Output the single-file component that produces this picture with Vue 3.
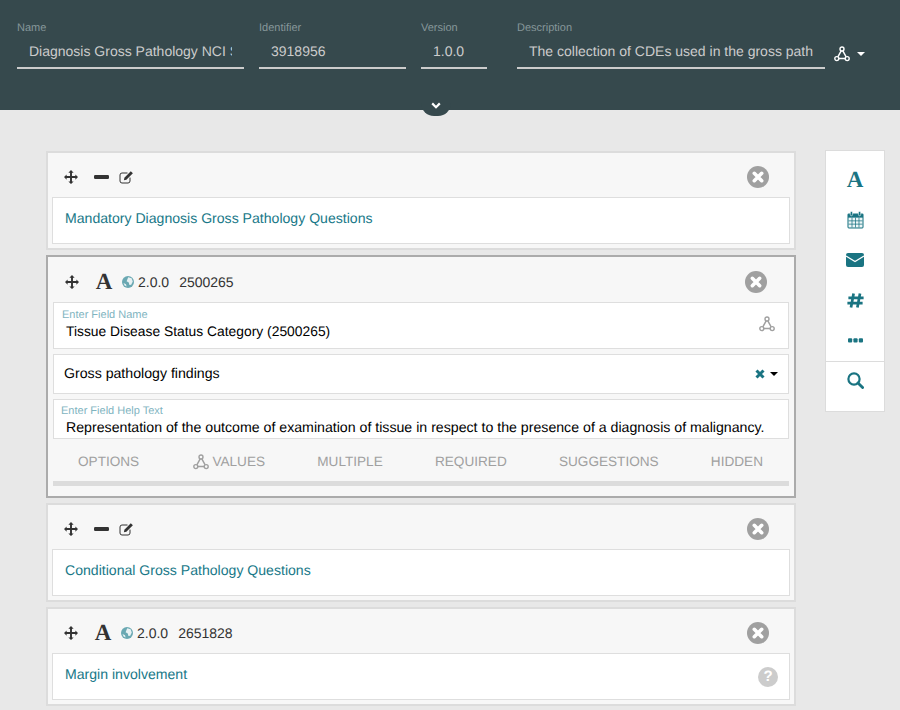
<script setup>
const fields = [
  { label: 'Name', value: 'Diagnosis Gross Pathology NCI S', width: 227 },
  { label: 'Identifier', value: '3918956', width: 147 },
  { label: 'Version', value: '1.0.0', width: 66 },
  { label: 'Description', value: 'The collection of CDEs used in the gross path', width: 308 }
]
const tabs = ['OPTIONS', 'VALUES', 'MULTIPLE', 'REQUIRED', 'SUGGESTIONS', 'HIDDEN']
</script>

<template>
  <div class="page">
    <svg class="defs" width="0" height="0" aria-hidden="true">
      <symbol id="move" viewBox="0 0 16 16">
        <path d="M8 0 11 3H9.1V6.9H13V5L16 8 13 11V9.1H9.1V13H11L8 16 5 13H6.9V9.1H3V11L0 8 3 5V6.9H6.9V3H5Z" fill="currentColor" />
      </symbol>
      <symbol id="minus" viewBox="0 0 15 4">
        <rect width="15" height="4" rx="1.2" fill="currentColor" />
      </symbol>
      <symbol id="edit" viewBox="0 0 15 14">
        <path d="M11 7.6V11a2 2 0 0 1-2 2H3a2 2 0 0 1-2-2V5a2 2 0 0 1 2-2h5.5" fill="none" stroke="currentColor" stroke-width="1" />
        <path d="M5.4 7.8 11.8 1.2 13.9 3.3 7.4 9.8 4.9 10.3Z" fill="currentColor" />
      </symbol>
      <symbol id="close" viewBox="0 0 22 22">
        <circle cx="11" cy="11" r="11" fill="currentColor" />
        <path d="M7.3 7.3 14.7 14.7M14.7 7.3 7.3 14.7" stroke="#fff" stroke-width="3.6" stroke-linecap="round" />
      </symbol>
      <symbol id="globe" viewBox="0 0 12 12">
        <circle cx="6" cy="6" r="6" fill="#6aa8b2" />
        <path d="M6.2 1.2 9.6 2.2 10.8 5.4 9.2 8.8 7.4 9 6.8 6.4 4.6 5.2Z" fill="#e8f1f3" />
        <path d="M1.5 7 4 8.2 4.6 10.6 2.6 9.6Z" fill="#e8f1f3" />
      </symbol>
      <symbol id="graph" viewBox="0 0 16 16">
        <path d="M8 3.4 3 12.4H13Z" fill="none" stroke="currentColor" stroke-width="1.5" />
        <circle cx="8" cy="3" r="2" fill="var(--graph-bg)" stroke="currentColor" stroke-width="1.4" />
        <circle cx="2.8" cy="12.6" r="2" fill="var(--graph-bg)" stroke="currentColor" stroke-width="1.4" />
        <circle cx="13.2" cy="12.6" r="2" fill="var(--graph-bg)" stroke="currentColor" stroke-width="1.4" />
      </symbol>
    </svg>

    <header class="top">
      <div v-for="f in fields" :key="f.label" class="field" :style="{ width: f.width + 'px' }">
        <div class="field-label">{{ f.label }}</div>
        <div class="field-box"><div class="field-value">{{ f.value }}</div></div>
      </div>
      <div class="top-menu">
        <svg class="top-graph"><use href="#graph" /></svg>
        <span class="caret caret-light"></span>
      </div>
      <div class="collapse">
        <svg width="10" height="7" viewBox="0 0 10 7"><path d="M1.2 1.4 5 5.2 8.8 1.4" fill="none" stroke="#fff" stroke-width="2.2" /></svg>
      </div>
    </header>

    <main class="main">
      <section class="cards">
        <article class="card">
          <div class="head">
            <svg class="i-move"><use href="#move" /></svg>
            <svg class="i-minus"><use href="#minus" /></svg>
            <svg class="i-edit"><use href="#edit" /></svg>
            <svg class="i-close"><use href="#close" /></svg>
          </div>
          <div class="box title-box"><a class="link">Mandatory Diagnosis Gross Pathology Questions</a></div>
        </article>

        <article class="card active">
          <div class="head head-tall">
            <svg class="i-move"><use href="#move" /></svg>
            <span class="i-a">A</span>
            <svg class="i-globe"><use href="#globe" /></svg>
            <span class="ver">2.0.0</span>
            <span class="cde">2500265</span>
            <svg class="i-close"><use href="#close" /></svg>
          </div>
          <div class="stack">
            <div class="box name-box">
              <div class="hint">Enter Field Name</div>
              <div class="val">Tissue Disease Status Category (2500265)</div>
              <svg class="name-graph"><use href="#graph" /></svg>
            </div>
            <div class="box select-box">
              <span>Gross pathology findings</span>
              <span class="select-tools">
                <svg width="10" height="10" viewBox="0 0 10 10"><path d="M1.5 1.5 8.5 8.5M8.5 1.5 1.5 8.5" stroke="#1a7482" stroke-width="3" /></svg>
                <span class="caret"></span>
              </span>
            </div>
            <div class="box help-box">
              <div class="hint hint-help">Enter Field Help Text</div>
              <div class="val">Representation of the outcome of examination of tissue in respect to the presence of a diagnosis of malignancy.</div>
            </div>
          </div>
          <div class="tabs">
            <span v-for="t in tabs" :key="t" class="tab">
              <svg v-if="t === 'VALUES'" class="tab-graph"><use href="#graph" /></svg>{{ t }}
            </span>
          </div>
          <div class="tab-bar"></div>
        </article>

        <article class="card">
          <div class="head">
            <svg class="i-move"><use href="#move" /></svg>
            <svg class="i-minus"><use href="#minus" /></svg>
            <svg class="i-edit"><use href="#edit" /></svg>
            <svg class="i-close"><use href="#close" /></svg>
          </div>
          <div class="box title-box"><a class="link">Conditional Gross Pathology Questions</a></div>
        </article>

        <article class="card">
          <div class="head">
            <svg class="i-move"><use href="#move" /></svg>
            <span class="i-a">A</span>
            <svg class="i-globe"><use href="#globe" /></svg>
            <span class="ver">2.0.0</span>
            <span class="cde">2651828</span>
            <svg class="i-close"><use href="#close" /></svg>
          </div>
          <div class="box title-box">
            <a class="link">Margin involvement</a>
            <span class="help-dot">?</span>
          </div>
        </article>
      </section>

      <aside class="palette">
        <div class="tool tool-a">A</div>
        <div class="tool">
          <svg class="cal-svg" width="17" height="18" viewBox="0 0 18 19">
            <rect x="0.5" y="2.5" width="17" height="16" rx="1.5" fill="#1a7482" />
            <rect x="1.6" y="7" width="14.8" height="10.4" fill="#eef6f7" />
            <path d="M5.3 7V17.4M9 7V17.4M12.7 7V17.4M1.6 10.4H16.4M1.6 13.9H16.4" stroke="#1a7482" stroke-width="0.8" />
            <rect x="3.5" y="0.5" width="2.4" height="4.5" rx="1.2" fill="#1a7482" stroke="#fff" stroke-width="0.6" />
            <rect x="12.1" y="0.5" width="2.4" height="4.5" rx="1.2" fill="#1a7482" stroke="#fff" stroke-width="0.6" />
          </svg>
        </div>
        <div class="tool">
          <svg width="18" height="14" viewBox="0 0 18 14">
            <rect width="18" height="14" rx="2" fill="#1a7482" />
            <path d="M0 3 9 8.6 18 3" fill="none" stroke="#fff" stroke-width="1.2" />
          </svg>
        </div>
        <div class="tool">
          <svg width="17" height="15" viewBox="0 0 17 15">
            <path d="M6.6 0.5 4 14.5M13 0.5 10.4 14.5M1.4 4.9H16.6M0.4 10.1H15.6" fill="none" stroke="#1a7482" stroke-width="2.7" />
          </svg>
        </div>
        <div class="tool">
          <svg width="15" height="5" viewBox="0 0 15 5">
            <rect y="0.2" width="4.2" height="4.4" rx="1" fill="#1a7482" />
            <rect x="5.4" y="0.2" width="4.2" height="4.4" rx="1" fill="#1a7482" />
            <rect x="10.8" y="0.2" width="4.2" height="4.4" rx="1" fill="#1a7482" />
          </svg>
        </div>
        <div class="tool tool-search">
          <svg class="search-svg" width="17" height="17" viewBox="0 0 17 17">
            <circle cx="7" cy="7" r="5.6" fill="none" stroke="#1a7482" stroke-width="2.2" />
            <path d="M11 11 15.6 15.6" stroke="#1a7482" stroke-width="2.8" stroke-linecap="round" />
          </svg>
        </div>
      </aside>
    </main>
  </div>
</template>

<style scoped>
.page {
  height: 710px;
  overflow: hidden;
  background: #e8e8e8;
  font-family: "Liberation Sans", Arial, sans-serif;
  font-size: 14px;
  color: #333;
  text-rendering: geometricPrecision;
}
.defs { position: absolute; }
svg { display: block; flex: none; }

.top {
  position: relative;
  --graph-bg: #36494d;
  display: flex;
  gap: 15px;
  height: 110px;
  box-sizing: border-box;
  padding: 20px 0 0 17px;
  background: #36494d;
}
.field:nth-child(4) { margin-left: 15px; }
.field-label {
  height: 14px;
  font-size: 11px;
  line-height: 16px;
  color: #86979a;
}
.field-box {
  height: 33px;
  padding: 0 12px;
  border-bottom: 2px solid #ccc;
}
.field-value {
  overflow: hidden;
  white-space: nowrap;
  line-height: 34px;
  color: #ccc;
}
.top-menu {
  display: flex;
  align-items: center;
  gap: 7px;
  height: 18px;
  margin: 25px 0 0 -6px;
}
.top-graph { width: 16px; height: 16px; color: #fff; }
.caret {
  width: 0;
  height: 0;
  border-left: 4px solid transparent;
  border-right: 4px solid transparent;
  border-top: 4px solid #000;
}
.caret-light { border-top-color: #fff; }
.collapse {
  position: absolute;
  left: 421px;
  top: 94px;
  width: 30px;
  height: 22px;
  border-radius: 0 0 13px 13px;
  background: #36494d;
  display: flex;
  justify-content: center;
  padding-top: 8px;
  box-sizing: border-box;
}

.main {
  display: flex;
  align-items: flex-start;
  padding: 40px 0 0 46px;
}
.cards {
  display: flex;
  flex-direction: column;
  gap: 5px;
  width: 750px;
  margin-top: 1px;
}
.card {
  box-sizing: border-box;
  height: 99px;
  padding: 0 4px 4px;
  background: #f7f7f7;
  border: 2px solid #dcdcdc;
  --graph-bg: #fff;
}
.card.active {
  height: 243px;
  padding: 0 5px 10px;
  border-color: #ababab;
}
.head {
  display: flex;
  align-items: center;
  height: 44px;
  padding: 4px 0 0 12px;
  box-sizing: border-box;
  color: #333;
}
.head-tall { height: 45px; padding-top: 5px; }
.i-move { width: 14px; height: 14px; }
.i-minus { width: 15px; height: 4px; margin-left: 16px; }
.i-edit { width: 15px; height: 14px; margin-left: 10px; margin-top: -1px; }
.i-a {
  width: 18px;
  margin-left: 16px;
  text-align: center;
  font-family: "Liberation Serif", serif;
  font-weight: 700;
  font-size: 23px;
  line-height: 22px;
}
.i-globe { width: 12px; height: 12px; margin-left: 9px; }
.ver { margin-left: 4px; }
.cde { margin-left: 10px; }
.i-close { width: 22px; height: 22px; margin-left: auto; margin-right: 21px; color: #a0a0a0; }
.head-tall .i-close { margin-right: 22px; }

.box {
  position: relative;
  box-sizing: border-box;
  background: #fff;
  border: 1px solid #dedede;
}
.title-box {
  display: flex;
  align-items: center;
  justify-content: space-between;
  height: 47px;
  padding: 0 11px 0 12px;
}
.link { color: #187888; margin-bottom: 6px; font-size: 14.09px; }
.help-dot {
  width: 20px;
  height: 20px;
  border-radius: 50%;
  background: #ccc;
  color: #fff;
  font-weight: 700;
  font-size: 15px;
  line-height: 20px;
  text-align: center;
}
.stack { display: flex; flex-direction: column; gap: 5px; }
.name-box { height: 47px; padding: 6px 0 0 8px; }
.hint { font-size: 11px; line-height: 13px; color: #7fb4bf; }
.val { margin: 0 0 0 4px; line-height: 18px; color: #000; white-space: nowrap; font-size: 13.85px; }
.name-graph {
  position: absolute;
  right: 13px;
  top: 13px;
  width: 16px;
  height: 16px;
  color: #a0a0a0;
}
.select-box {
  display: flex;
  align-items: center;
  justify-content: space-between;
  height: 40px;
  padding: 0 10px 2px;
  color: #000;
  font-size: 14.15px;
}
.select-tools { display: flex; align-items: center; gap: 5px; margin-top: 2px; }
.help-box { height: 40px; padding: 5px 0 0 7px; }
.help-box .val { margin: 1px 0 0 5px; font-size: 14.16px; }
.tabs {
  display: flex;
  justify-content: space-between;
  align-items: center;
  height: 42px;
  padding: 2px 26px 0 25px;
  box-sizing: border-box;
}
.tab { display: flex; align-items: center; gap: 3px; color: #a0a0a0; font-size: 13.6px; }
.tab-graph { width: 16px; height: 16px; margin-left: 2px; color: #a0a0a0; --graph-bg: #f7f7f7; margin-top: 1px; }
.tab-bar { height: 5px; background: #dcdcdc; }

.palette {
  box-sizing: border-box;
  width: 60px;
  height: 262px;
  margin-left: 29px;
  padding-top: 9px;
  background: #fff;
  border: 1px solid #dcdcdc;
}
.tool {
  display: flex;
  align-items: center;
  justify-content: center;
  height: 40px;
}
.cal-svg { margin-bottom: 1px; }
.tool-a {
  font-family: "Liberation Serif", serif;
  font-weight: 700;
  font-size: 23px;
  color: #1a7482;
}
.tool-search {
  margin-top: 1px;
  border-top: 1px solid #dcdcdc;
  box-sizing: content-box;
}
.search-svg { margin-bottom: 3px; }
</style>
